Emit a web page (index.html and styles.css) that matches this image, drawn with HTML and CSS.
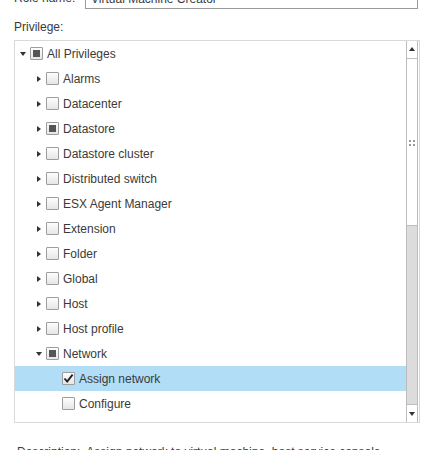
FILE: index.html
```html
<!DOCTYPE html>
<html>
<head>
<meta charset="utf-8">
<link rel="stylesheet" href="styles.css">
</head>
<body>
<div class="page">
  <div class="name-row">
    <label class="name-label">Role name:</label>
    <div class="name-input">Virtual Machine Creator</div>
  </div>
  <div class="priv-label">Privilege:</div>
  <div class="tree-box">
    <div class="tree">
      <div class="row l0"><span class="tog down"></span><span class="cb partial"></span><span class="txt">All Privileges</span></div>
      <div class="row l1"><span class="tog right"></span><span class="cb"></span><span class="txt">Alarms</span></div>
      <div class="row l1"><span class="tog right"></span><span class="cb"></span><span class="txt">Datacenter</span></div>
      <div class="row l1"><span class="tog right"></span><span class="cb partial"></span><span class="txt">Datastore</span></div>
      <div class="row l1"><span class="tog right"></span><span class="cb"></span><span class="txt">Datastore cluster</span></div>
      <div class="row l1"><span class="tog right"></span><span class="cb"></span><span class="txt">Distributed switch</span></div>
      <div class="row l1"><span class="tog right"></span><span class="cb"></span><span class="txt">ESX Agent Manager</span></div>
      <div class="row l1"><span class="tog right"></span><span class="cb"></span><span class="txt">Extension</span></div>
      <div class="row l1"><span class="tog right"></span><span class="cb"></span><span class="txt">Folder</span></div>
      <div class="row l1"><span class="tog right"></span><span class="cb"></span><span class="txt">Global</span></div>
      <div class="row l1"><span class="tog right"></span><span class="cb"></span><span class="txt">Host</span></div>
      <div class="row l1"><span class="tog right"></span><span class="cb"></span><span class="txt">Host profile</span></div>
      <div class="row l1"><span class="tog down"></span><span class="cb partial"></span><span class="txt">Network</span></div>
      <div class="row l2 selected"><span class="tog"></span><span class="cb checked"><svg viewBox="0 0 13 13" width="13" height="13"><path d="M2.5 6.5 L5.2 9.6 L10.6 2.6" fill="none" stroke="#222" stroke-width="1.9"/></svg></span><span class="txt">Assign network</span></div>
      <div class="row l2"><span class="tog"></span><span class="cb"></span><span class="txt">Configure</span></div>
      <div class="row l2"><span class="tog"></span><span class="cb"></span><span class="txt">Delete network</span></div>
    </div>
    <div class="sbar">
      <div class="sbtn"><span class="arr up"></span></div>
      <div class="thumb"><span class="grip"><i></i><i></i><i></i><i></i></span></div>
      <div class="track"></div>
      <div class="sbtn bottom"><span class="arr dn"></span></div>
    </div>
  </div>
  <div class="desc">Description:&nbsp; Assign network to virtual machine, host service console</div>
</div>
</body>
</html>
```
FILE: styles.css
```css
html, body {
  margin: 0;
  padding: 0;
  background: #fff;
}
body {
  width: 438px;
  height: 450px;
  overflow: hidden;
  font-family: "Liberation Sans", Arial, sans-serif;
  font-size: 12px;
  color: #3a3a3a;
}
.page {
  padding: 0 18px 0 14px;
}
.name-row {
  display: flex;
  align-items: center;
  margin-top: -14px;
  height: 24px;
}
.name-label {
  width: 71px;
}
.name-input {
  flex: 1;
  height: 22px;
  box-sizing: border-box;
  border: 1px solid #999;
  padding: 3px 5px;
  line-height: 16px;
  margin-right: 2px;
}
.priv-label {
  padding-top: 9px;
  height: 16px;
  line-height: 16px;
}
.tree-box {
  box-sizing: border-box;
  height: 383px;
  border: 1px solid #d9d9d9;
  display: flex;
  overflow: hidden;
  width: 406px;
  margin-top: 5px;
}
.tree {
  flex: 1;
  overflow: hidden;
}
.row {
  height: 25px;
  display: flex;
  align-items: center;
  white-space: nowrap;
}
.row.l0 { padding-left: 4px; }
.row.l1 { padding-left: 20px; }
.row.l2 { padding-left: 36px; }
.row.selected { background: #b2ddf7; }
.tog {
  width: 8px;
  height: 8px;
  margin-right: 3px;
  position: relative;
  flex: none;
}
.tog.down::after {
  content: "";
  position: absolute;
  left: 1px;
  top: 2px;
  border-left: 3px solid transparent;
  border-right: 3px solid transparent;
  border-top: 4px solid #333;
}
.tog.right::after {
  content: "";
  position: absolute;
  left: 2px;
  top: 1px;
  border-top: 3px solid transparent;
  border-bottom: 3px solid transparent;
  border-left: 4px solid #333;
}
.cb {
  width: 13px;
  height: 13px;
  box-sizing: border-box;
  border: 1px solid #9d9d9d;
  border-radius: 1px;
  background: linear-gradient(#fdfdfd, #e6e6e6);
  margin-right: 4px;
  flex: none;
  position: relative;
}
.cb.partial::after {
  content: "";
  position: absolute;
  left: 2px;
  top: 2px;
  width: 7px;
  height: 7px;
  background: #555;
}
.cb svg {
  position: absolute;
  left: -1px;
  top: -1px;
}
.txt {
  line-height: 14px;
}
.sbar {
  width: 12px;
  flex: none;
  margin-right: 1px;
  box-sizing: border-box;
  border-left: 1px solid #bdbdbd;
  border-right: 1px solid #bdbdbd;
  display: flex;
  flex-direction: column;
}
.sbtn {
  height: 17px;
  border-bottom: 1px solid #bdbdbd;
  background: #fff;
  position: relative;
  flex: none;
}
.sbtn.bottom {
  border-bottom: none;
  border-top: 1px solid #bdbdbd;
}
.arr {
  position: absolute;
  left: 2px;
}
.arr.up {
  top: 6px;
  border-left: 3px solid transparent;
  border-right: 3px solid transparent;
  border-bottom: 4px solid #333;
}
.arr.dn {
  top: 7px;
  border-left: 3px solid transparent;
  border-right: 3px solid transparent;
  border-top: 4px solid #333;
}
.thumb {
  height: 166px;
  background: #fff;
  border-bottom: 1px solid #bdbdbd;
  display: flex;
  align-items: center;
  justify-content: center;
  flex: none;
}
.grip {
  display: grid;
  grid-template-columns: 2px 2px;
  gap: 2px;
  margin-top: 2px;
}
.grip i {
  width: 2px;
  height: 2px;
  background: #999;
}
.track {
  flex: 1;
  background: #dcdcdc;
}
.desc {
  margin-top: 22px;
  padding-left: 3px;
  white-space: nowrap;
}
```
